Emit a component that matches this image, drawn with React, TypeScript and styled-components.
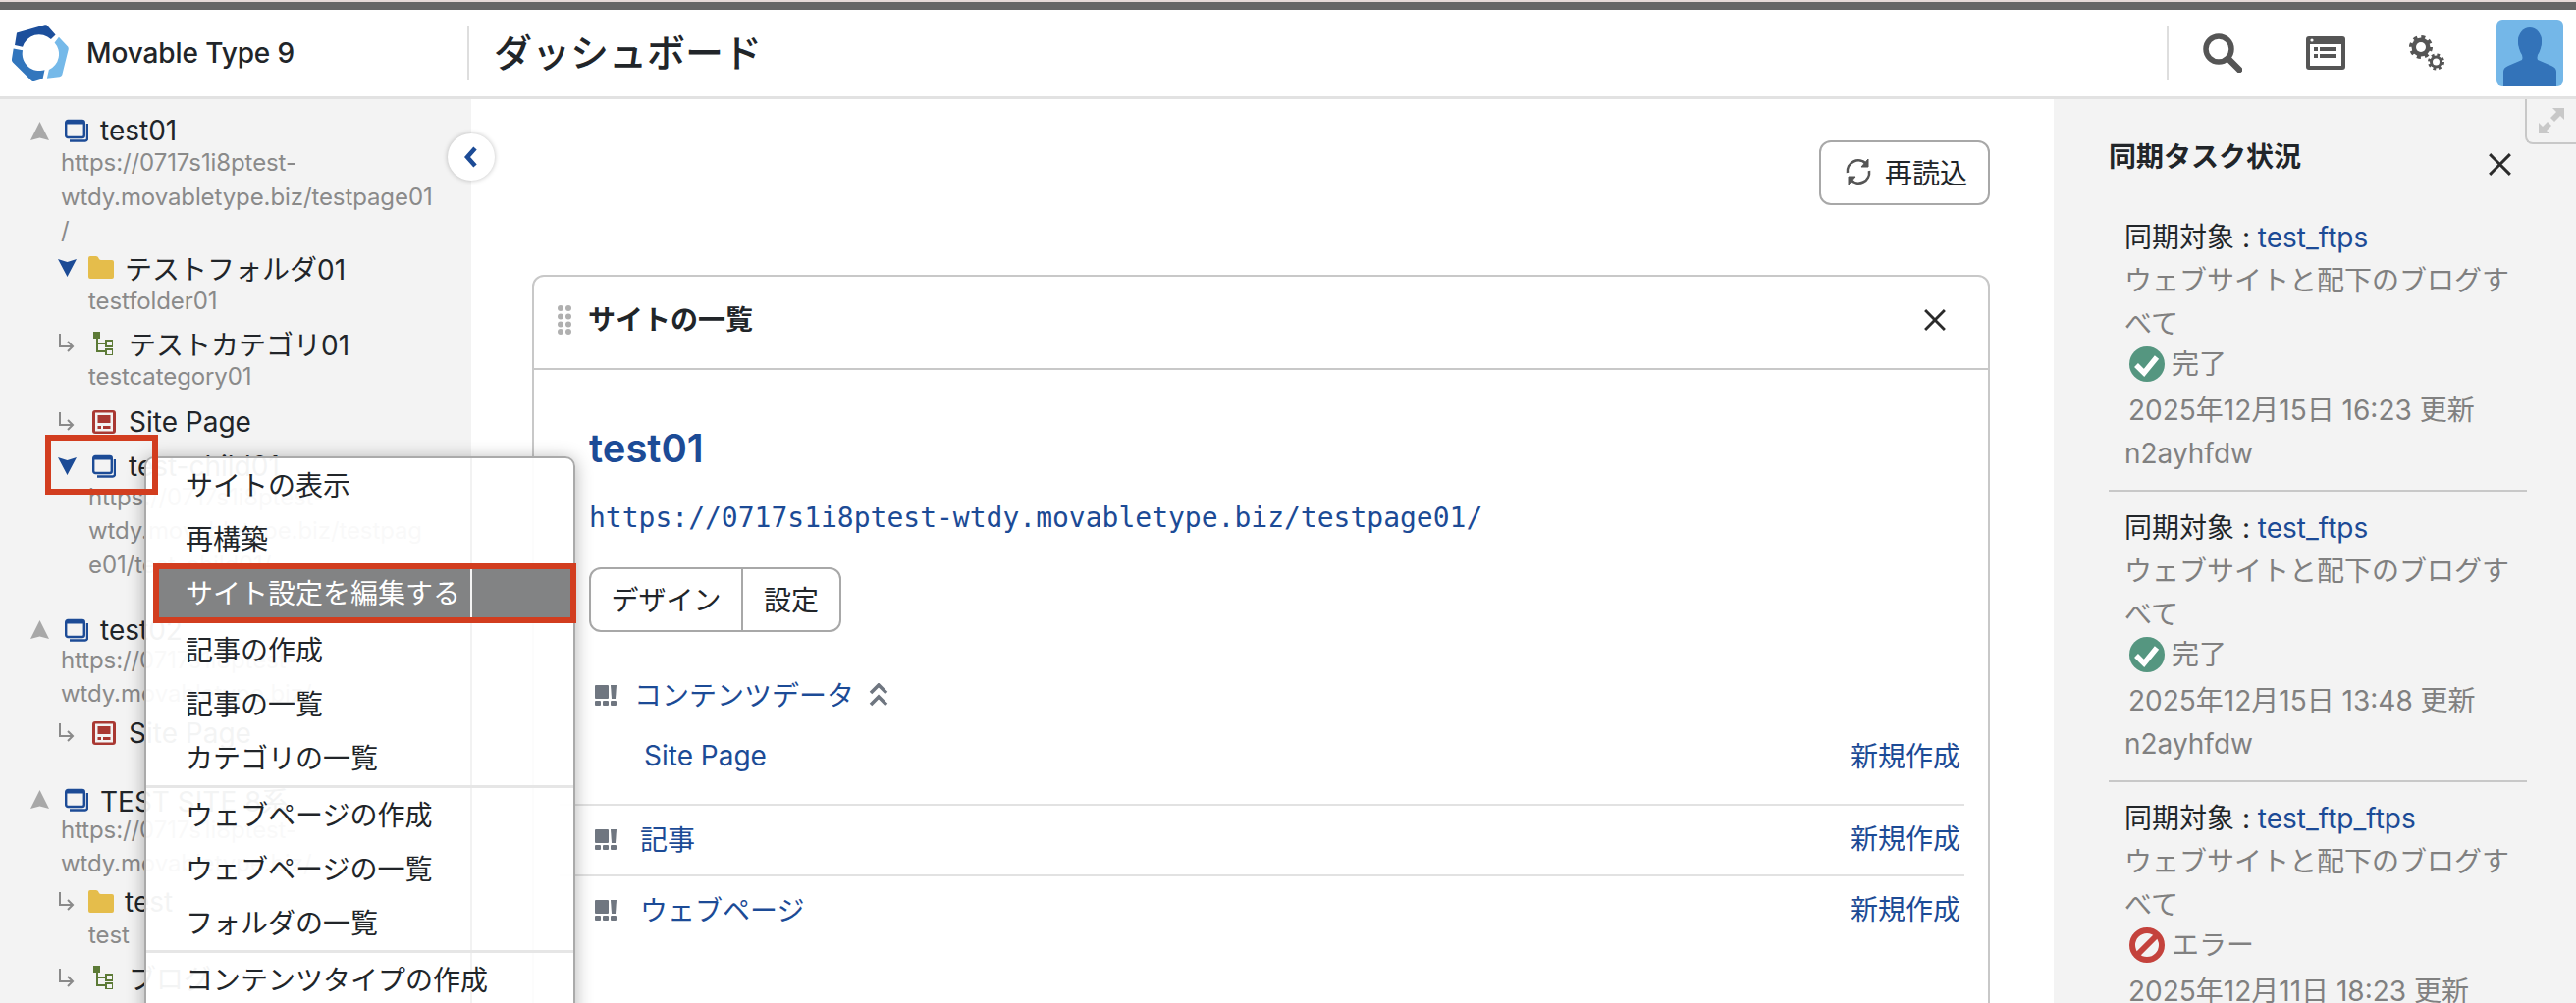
import { FC, ReactNode } from "react";
import styled, { createGlobalStyle } from "styled-components";

const BLUE = "#1c4b96";
const RED_MARK = "#d23d1f";

const GlobalStyle = createGlobalStyle`
  html, body {
    margin: 0;
    padding: 0;
    width: 2624px;
    height: 1022px;
    overflow: hidden;
    background: #fff;
    font-family: Inter, "Noto Sans CJK JP", sans-serif;
    color: #212529;
  }
  * { box-sizing: border-box; }
`;

const Logo: FC = () => (
  <svg width="58" height="58" viewBox="37 75 173 173">
    <path fill="#1c4f9c" d="M52 100 L138 76 Q143 75 147 80 L170 106 L156 120 A52 52 0 0 0 70 143 L46 138 Z" />
    <path fill="#75b9e9" d="M180 113 L208 143 Q210 147 209 151 L190 228 Q188 233 182 234 L144 238 L150 212 A52 52 0 0 0 167 130 Z" />
    <path fill="#3276bd" d="M42 148 L70 153 A52 52 0 0 0 137 213 L131 240 L105 248 Q100 249 96 245 L40 190 Q36 185 37 180 Z" />
  </svg>
);

const SearchIcon: FC = () => (
  <svg width="40" height="40" viewBox="0 0 40 40">
    <circle cx="16" cy="16" r="13" fill="none" stroke="#555" strokeWidth="5.5" />
    <path d="M26 26 L37 37" stroke="#555" strokeWidth="6.5" strokeLinecap="round" />
  </svg>
);

const WindowIcon: FC = () => (
  <svg width="40" height="34" viewBox="0 0 40 34">
    <rect width="40" height="34" rx="3" fill="#555" />
    <rect x="4" y="8" width="32" height="22" fill="#fff" />
    <circle cx="6" cy="4" r="1.6" fill="#fff" />
    <path d="M8 11h4v4H8zM8 18h4v4H8zM14 11h17v4H14zM14 18h17v4H14z" fill="#555" />
  </svg>
);

const Gear: FC<{ cx: number; cy: number; r: number; hole: number; tooth: number; teeth: number }> = ({ cx, cy, r, hole, tooth, teeth }) => {
  const circ = 2 * Math.PI * r;
  return (
    <g>
      <circle cx={cx} cy={cy} r={r} fill="none" stroke="#555" strokeWidth={tooth} strokeDasharray={`${circ / (teeth * 2)} ${circ / (teeth * 2)}`} />
      <circle cx={cx} cy={cy} r={r} fill="#555" />
      <circle cx={cx} cy={cy} r={hole} fill="#fff" />
    </g>
  );
};

const GearsIcon: FC = () => (
  <svg width="36" height="36" viewBox="0 0 36 36">
    <Gear cx={12} cy={12} r={9.5} hole={5} tooth={5} teeth={8} />
    <Gear cx={27.5} cy={27} r={6.5} hole={3.5} tooth={4} teeth={8} />
  </svg>
);

const AvatarArt: FC = () => (
  <svg width="68" height="68" viewBox="0 0 68 68">
    <rect width="68" height="68" rx="6" fill="#74b7e8" />
    <path fill="#3373b9" d="M7 68 V53 Q7 49 12 47 L26 41 Q27 39 26 36 Q22 30 22 21 Q22 14 34 14 Q46 14 46 21 Q46 30 42 36 Q41 39 42 41 L56 47 Q61 49 61 53 V68 Z" />
    <ellipse cx="34" cy="22" rx="12" ry="14" fill="#3373b9" />
  </svg>
);

const SiteIcon: FC = () => (
  <svg width="24" height="24" viewBox="0 0 24 24">
    <path d="M5 22.5 H21 Q23 22.5 23 20 V5" fill="none" stroke={BLUE} strokeWidth="2.4" />
    <rect x="1.2" y="2" width="18.6" height="17" rx="2" fill="#f3f3f3" stroke={BLUE} strokeWidth="2.4" />
    <path d="M2 2 H19 V5.5 H2 Z" fill={BLUE} />
  </svg>
);

const FolderIcon: FC = () => (
  <svg width="26" height="23" viewBox="0 0 26 23">
    <path fill="#e5bd4b" d="M0 2 Q0 0 2 0 H8 Q10 0 11 3 Q11.5 4 13 4 H24 Q26 4 26 6 V21 Q26 23 24 23 H2 Q0 23 0 21 Z" />
  </svg>
);

const CategoryIcon: FC = () => (
  <svg width="20" height="24" viewBox="0 0 20 24">
    <path d="M4 6 V20 H13 M4 12 H13" fill="none" stroke="#5c7a36" strokeWidth="2" />
    <rect width="7" height="7" fill="#5c7a36" />
    <rect x="13" y="9" width="7" height="6" fill="#f3f3f3" stroke="#5c7a36" strokeWidth="2" />
    <rect x="13" y="18" width="7" height="6" fill="#f3f3f3" stroke="#5c7a36" strokeWidth="2" />
  </svg>
);

const PageIcon: FC = () => (
  <svg width="24" height="24" viewBox="0 0 24 24">
    <rect width="24" height="24" rx="3" fill="#a93832" />
    <rect x="3" y="2.5" width="18" height="19" fill="#f3f3f3" />
    <rect x="5.5" y="5" width="13" height="8" fill="#a93832" />
    <rect x="5.5" y="16" width="3.5" height="3" fill="#a93832" />
    <rect x="11" y="16" width="7.5" height="3" fill="#a93832" />
  </svg>
);

const Triangle: FC<{ up?: boolean }> = ({ up }) =>
  up ? (
    <svg width="19" height="19" viewBox="0 0 19 19">
      <path fill="#a8a8a8" d="M9.5 0 L19 19 L9.5 16.5 L0 19 Z" />
    </svg>
  ) : (
    <svg width="19" height="18" viewBox="0 0 19 18">
      <path fill={BLUE} d="M9.5 18 L19 0 L9.5 3 L0 0 Z" />
    </svg>
  );

const ElbowIcon: FC = () => (
  <svg width="17" height="19" viewBox="0 0 17 19">
    <path d="M2 0 V13 H14 M10 8 L15 13 L10 18" fill="none" stroke="#8a8a8a" strokeWidth="2" />
  </svg>
);

const ChevronLeft: FC = () => (
  <svg width="16" height="22" viewBox="0 0 16 22">
    <path d="M12 2 L4 11 L12 20" fill="none" stroke={BLUE} strokeWidth="4.5" />
  </svg>
);

const RefreshIcon: FC = () => (
  <svg width="28" height="28" viewBox="0 0 28 28" fill="none" stroke="#555" strokeWidth="2.6">
    <path d="M3 15 A11 11 0 0 1 22 6" />
    <path d="M25 13 A11 11 0 0 1 6 22" />
    <path d="M24 1 V9 H17 Z" fill="#555" strokeWidth="1" />
    <path d="M4 27 V19 H11 Z" fill="#555" strokeWidth="1" />
  </svg>
);

const CloseIcon: FC<{ size: number }> = ({ size }) => (
  <svg width={size} height={size} viewBox="0 0 20 20">
    <path d="M1 1 L19 19 M19 1 L1 19" stroke="#2b2b2b" strokeWidth="2.6" />
  </svg>
);

const DragDots: FC = () => (
  <svg width="14" height="30" viewBox="0 0 14 30" fill="#b0b0b0">
    {[3, 11.5, 19.5, 27].map((y) => (
      <g key={y}>
        <circle cx="3" cy={y} r="3" />
        <circle cx="11" cy={y} r="3" />
      </g>
    ))}
  </svg>
);

const ContentIcon: FC = () => (
  <svg width="22" height="21" viewBox="0 0 22 21" fill="#6f7680">
    <rect width="14" height="14" rx="1" />
    <path d="M16 0 H22 L21 14 H17 Z" />
    <rect y="16" width="6" height="5" rx="1" />
    <rect x="8" y="16" width="6" height="5" rx="1" />
    <rect x="16" y="16" width="6" height="5" rx="1" />
  </svg>
);

const DoubleChevron: FC = () => (
  <svg width="20" height="24" viewBox="0 0 20 24">
    <path d="M2 10 L10 2 L18 10 M2 22 L10 14 L18 22" fill="none" stroke="#6f7680" strokeWidth="3.6" />
  </svg>
);

const CheckBadge: FC = () => (
  <svg width="36" height="36" viewBox="0 0 36 36">
    <circle cx="18" cy="18" r="18" fill="#559680" />
    <path d="M7 19 L15 27 L28 11" fill="none" stroke="#fff" strokeWidth="5.5" />
  </svg>
);

const ErrorBadge: FC = () => (
  <svg width="36" height="36" viewBox="0 0 36 36">
    <circle cx="18" cy="18" r="15" fill="none" stroke="#c4423c" strokeWidth="6" />
    <path d="M7 29 L29 7" stroke="#c4423c" strokeWidth="6" />
  </svg>
);

const ExpandIcon: FC = () => (
  <svg width="26" height="26" viewBox="0 0 26 26" fill="#c8c8c8">
    <path d="M14 0 H26 V12 L22 8 L16 14 L12 10 L18 4 Z" />
    <path d="M0 26 V15 L4 19 L9 14 L13 18 L8 23 L11 26 Z" />
  </svg>
);

const Page = styled.div`
  position: relative;
  width: 2624px;
  height: 1022px;
  overflow: hidden;
`;

const TopStripe = styled.div`
  height: 10px;
  background: #666;
  border-top: 2px solid #e6dad8;
`;

const Header = styled.header`
  display: flex;
  align-items: center;
  height: 91px;
  border-bottom: 3px solid #e2e2e2;
`;

const Brand = styled.div`
  display: flex;
  align-items: center;
  gap: 18px;
  width: 476px;
  padding-left: 12px;
  font-size: 28px;
  font-weight: 500;
  letter-spacing: -0.1px;
`;

const HeaderDivider = styled.div`
  width: 2px;
  height: 55px;
  background: #dedede;
`;

const PageTitle = styled.h1`
  flex: 1;
  margin: 0 0 6px 25px;
  font-size: 39px;
  font-weight: 500;
`;

const HeaderTools = styled.div`
  display: flex;
  align-items: center;
  width: 415px;
`;

const ToolSlot = styled.div<{ $width: number }>`
  display: flex;
  justify-content: center;
  width: ${(p) => p.$width}px;
`;

const Avatar = styled.div`
  display: flex;
  height: 68px;
  margin-left: 19px;
`;

const Body = styled.div`
  display: flex;
  height: 921px;
`;

const Sidebar = styled.nav`
  width: 480px;
  flex-shrink: 0;
  padding-top: 15px;
  background: #f3f3f3;
  overflow: hidden;
`;

const TreeRow = styled.div<{ $indent: number; $top?: number }>`
  display: flex;
  align-items: center;
  height: 34px;
  margin-top: ${(p) => p.$top ?? 0}px;
  padding-left: ${(p) => p.$indent}px;
  font-size: 28px;
  white-space: nowrap;
`;

const ArrowSlot = styled.span`
  display: flex;
  justify-content: flex-start;
  width: 19px;
`;

const IconSlot = styled.span<{ $left?: number }>`
  display: flex;
  margin-left: ${(p) => p.$left ?? 0}px;
`;

const SubText = styled.div<{ $indent: number; $top?: number }>`
  margin-top: ${(p) => p.$top ?? 0}px;
  padding-left: ${(p) => p.$indent}px;
  font-size: 24px;
  letter-spacing: -0.1px;
  line-height: 34.5px;
  color: #8a8a8a;
  white-space: nowrap;
`;

const CollapseButton = styled.button`
  position: absolute;
  left: 456px;
  top: 136px;
  display: flex;
  align-items: center;
  justify-content: center;
  width: 48px;
  height: 48px;
  padding: 0;
  border: none;
  border-radius: 50%;
  background: #fff;
  box-shadow: 0 0 5px rgba(0, 0, 0, 0.25);
`;

const Main = styled.main`
  flex: 1;
  padding: 42px 65px 0 62px;
  overflow: hidden;
`;

const ReloadRow = styled.div`
  display: flex;
  justify-content: flex-end;
`;

const ReloadButton = styled.button`
  display: flex;
  align-items: center;
  gap: 13px;
  width: 174px;
  height: 66px;
  padding: 0 0 2px 24px;
  border: 2px solid #a8a8a8;
  border-radius: 12px;
  background: #fff;
  color: #212529;
  font: inherit;
  font-size: 28px;
`;

const Card = styled.section`
  margin-top: 71px;
  height: 800px;
  border: 2px solid #c8c8c8;
  border-radius: 12px 12px 0 0;
`;

const CardHeader = styled.div`
  display: flex;
  align-items: center;
  height: 95px;
  padding: 0 43px 5px 24px;
  border-bottom: 2px solid #c8c8c8;
`;

const CardTitle = styled.h2`
  flex: 1;
  margin: 0 0 4px 17px;
  font-size: 28px;
  font-weight: 700;
`;

const CardBody = styled.div`
  padding: 56px 28px 0 56px;
`;

const SiteName = styled.a`
  display: block;
  color: ${BLUE};
  font-size: 40px;
  font-weight: 600;
  line-height: 48px;
`;

const SiteUrl = styled.a`
  display: block;
  margin-top: 27px;
  color: ${BLUE};
  font-family: "DejaVu Sans Mono", monospace;
  font-size: 28px;
  line-height: 40px;
  white-space: nowrap;
`;

const ButtonGroup = styled.div`
  display: inline-flex;
  height: 66px;
  margin-top: 30px;
  border: 2px solid #a8a8a8;
  border-radius: 12px;
`;

const GroupButton = styled.span<{ $width: number; $divided?: boolean }>`
  display: flex;
  align-items: center;
  justify-content: center;
  width: ${(p) => p.$width}px;
  padding-bottom: 2px;
  font-size: 28px;
  border-left: ${(p) => (p.$divided ? "2px solid #a8a8a8" : "none")};
`;

const ContentRow = styled.div<{ $top: number }>`
  display: flex;
  align-items: center;
  height: 40px;
  margin-top: ${(p) => p.$top}px;
  font-size: 28px;
  color: ${BLUE};
`;

const ContentLabel = styled.span<{ $left: number }>`
  margin-left: ${(p) => p.$left}px;
  padding-bottom: 3px;
  white-space: nowrap;
`;

const RowAction = styled.a`
  margin-left: auto;
  padding-bottom: 5px;
  color: ${BLUE};
  white-space: nowrap;
`;

const RowIcon = styled.span`
  display: flex;
  margin-left: 6px;
`;

const ChevronSlot = styled.span`
  display: flex;
  margin-left: 15px;
`;

const RowDivider = styled.div<{ $top: number }>`
  height: 2px;
  margin: ${(p) => p.$top}px -4px 0 -30px;
  background: #e2e2e2;
`;

const TaskPanel = styled.aside`
  position: relative;
  width: 532px;
  flex-shrink: 0;
  padding: 37px 51px 0 56px;
  background: #f3f3f3;
  overflow: hidden;
`;

const ExpandTab = styled.div`
  position: absolute;
  top: 0;
  right: 0;
  display: flex;
  align-items: center;
  justify-content: center;
  width: 52px;
  height: 46px;
  border-left: 2px solid #c8c8c8;
  border-bottom: 2px solid #c8c8c8;
  border-bottom-left-radius: 8px;
`;

const PanelHead = styled.div`
  display: flex;
  align-items: flex-start;
  justify-content: space-between;
  height: 82px;
  padding-right: 15px;
`;

const PanelTitle = styled.h3`
  margin: 0;
  font-size: 28px;
  font-weight: 700;
  line-height: 44px;
`;

const PanelClose = styled.span`
  display: flex;
  margin-top: 18px;
`;

const Task = styled.div<{ $last?: boolean }>`
  margin-right: -1px;
  padding: 0 16px 15px 16px;
  border-bottom: ${(p) => (p.$last ? "none" : "2px solid #c8c8c8")};
  margin-bottom: 15px;
  font-size: 28px;
  line-height: 44px;
  color: #808080;
`;

const TaskTarget = styled.div`
  color: #212529;
  white-space: nowrap;
`;

const TaskLink = styled.a`
  color: ${BLUE};
`;

const TaskStatus = styled.div`
  display: flex;
  align-items: center;
  gap: 7px;
  padding-left: 5px;
  height: 44px;
  margin: -3px 0 3px;
`;

const TaskDate = styled.div`
  padding-left: 4px;
  white-space: nowrap;
`;

const ContextMenu = styled.div`
  position: absolute;
  left: 147px;
  top: 465px;
  width: 439px;
  height: 600px;
  border: 2px solid #aaa;
  border-radius: 10px;
  background: rgba(255, 255, 255, 0.95);
  box-shadow: 0 2px 18px rgba(0, 0, 0, 0.3);

  &::before {
    content: "";
    position: absolute;
    left: 330px;
    top: 0;
    bottom: 0;
    width: 2px;
    background: #f2f2f2;
  }
`;

const MenuItem = styled.div`
  position: relative;
  display: flex;
  align-items: center;
  height: 55px;
  padding: 0 0 3px 40px;
  font-size: 28px;
  white-space: nowrap;
`;

const MenuItemActive = styled.div`
  position: relative;
  display: flex;
  align-items: center;
  height: 61px;
  margin: -3px -3px 0 7px;
  padding: 0 0 3px 27px;
  border: 6px solid ${RED_MARK};
  background: #828384;
  color: #fff;
  font-size: 28px;
  white-space: nowrap;

  &::after {
    content: "";
    position: absolute;
    left: 317px;
    top: 0;
    bottom: 0;
    width: 2px;
    background: #f4f4f4;
  }
`;

const MenuDivider = styled.div`
  position: relative;
  height: 3px;
  background: #e6e6e6;
`;

const TreeMark = styled.div`
  position: absolute;
  left: 46px;
  top: 443px;
  width: 115px;
  height: 61px;
  border: 6px solid ${RED_MARK};
`;

type SubLinesProps = { lines: string[]; indent: number; top?: number };

const SubLines: FC<SubLinesProps> = ({ lines, indent, top }) => (
  <div>
    {lines.map((line, i) => (
      <SubText key={line} $indent={indent} $top={i === 0 ? top : 0}>
        {line}
      </SubText>
    ))}
  </div>
);

const RootRow: FC<{ label: string; top?: number }> = ({ label, top }) => (
  <TreeRow $indent={31} $top={top}>
    <ArrowSlot>
      <Triangle up />
    </ArrowSlot>
    <IconSlot $left={16}>
      <SiteIcon />
    </IconSlot>
    <IconSlot $left={12}>{label}</IconSlot>
  </TreeRow>
);

const ChildRow: FC<{ icon: ReactNode; arrow: ReactNode; label: string; top?: number; iconLeft: number; textLeft: number }> = ({
  icon,
  arrow,
  label,
  top,
  iconLeft,
  textLeft,
}) => (
  <TreeRow $indent={59} $top={top}>
    <ArrowSlot>{arrow}</ArrowSlot>
    <IconSlot $left={iconLeft}>{icon}</IconSlot>
    <IconSlot $left={textLeft}>{label}</IconSlot>
  </TreeRow>
);

const TreeNav: FC = () => (
  <Sidebar>
    <RootRow label="test01" />
    <SubLines indent={62} top={-1} lines={["https://0717s1i8ptest-", "wtdy.movabletype.biz/testpage01", "/"]} />
    <ChildRow arrow={<Triangle />} icon={<FolderIcon />} label="テストフォルダ01" top={3} iconLeft={12} textLeft={11} />
    <SubLines indent={90} lines={["testfolder01"]} />
    <ChildRow arrow={<ElbowIcon />} icon={<CategoryIcon />} label="テストカテゴリ01" top={8.5} iconLeft={17} textLeft={16} />
    <SubLines indent={90} lines={["testcategory01"]} />
    <ChildRow arrow={<ElbowIcon />} icon={<PageIcon />} label="Site Page" top={11.5} iconLeft={16} textLeft={13} />
    <ChildRow arrow={<Triangle />} icon={<SiteIcon />} label="test-child01" top={11} iconLeft={16} textLeft={13} />
    <SubLines indent={90} top={-2} lines={["https://0717s1i8ptest-", "wtdy.movabletype.biz/testpag", "e01/test-child01/"]} />
    <RootRow label="test02" top={31.5} />
    <SubLines indent={62} top={-3} lines={["https://0717s1i8ptest-", "wtdy.movabletype.biz/"]} />
    <ChildRow arrow={<ElbowIcon />} icon={<PageIcon />} label="Site Page" top={5} iconLeft={16} textLeft={13} />
    <RootRow label="TEST SITE 8系" top={34} />
    <SubLines indent={62} top={-3} lines={["https://0717s1i8ptest-", "wtdy.movabletype.biz/"]} />
    <ChildRow arrow={<ElbowIcon />} icon={<FolderIcon />} label="test" top={4} iconLeft={12} textLeft={11} />
    <SubLines indent={90} lines={["test"]} />
    <ChildRow arrow={<ElbowIcon />} icon={<CategoryIcon />} label="ブログ" top={9} iconLeft={17} textLeft={16} />
  </Sidebar>
);

const tasks = [
  { link: "test_ftps", ok: true, date: "2025年12月15日 16:23 更新", user: "n2ayhfdw" },
  { link: "test_ftps", ok: true, date: "2025年12月15日 13:48 更新", user: "n2ayhfdw" },
  { link: "test_ftp_ftps", ok: false, date: "2025年12月11日 18:23 更新", user: "n2ayhfdw" },
];

const App: FC = () => {
  return (
    <Page>
      <GlobalStyle />
      <TopStripe />
      <Header>
        <Brand>
          <Logo />
          Movable Type 9
        </Brand>
        <HeaderDivider />
        <PageTitle>ダッシュボード</PageTitle>
        <HeaderDivider />
        <HeaderTools>
          <ToolSlot $width={110}>
            <SearchIcon />
          </ToolSlot>
          <ToolSlot $width={100}>
            <WindowIcon />
          </ToolSlot>
          <ToolSlot $width={105}>
            <GearsIcon />
          </ToolSlot>
          <Avatar>
            <AvatarArt />
          </Avatar>
        </HeaderTools>
      </Header>
      <Body>
        <TreeNav />
        <Main>
          <ReloadRow>
            <ReloadButton>
              <RefreshIcon />
              再読込
            </ReloadButton>
          </ReloadRow>
          <Card>
            <CardHeader>
              <DragDots />
              <CardTitle>サイトの一覧</CardTitle>
              <CloseIcon size={22} />
            </CardHeader>
            <CardBody>
              <SiteName>test01</SiteName>
              <SiteUrl>https://0717s1i8ptest-wtdy.movabletype.biz/testpage01/</SiteUrl>
              <ButtonGroup>
                <GroupButton $width={153}>デザイン</GroupButton>
                <GroupButton $width={100} $divided>
                  設定
                </GroupButton>
              </ButtonGroup>
              <ContentRow $top={44}>
                <RowIcon>
                  <ContentIcon />
                </RowIcon>
                <ContentLabel $left={18}>コンテンツデータ</ContentLabel>
                <ChevronSlot>
                  <DoubleChevron />
                </ChevronSlot>
              </ContentRow>
              <ContentRow $top={23}>
                <ContentLabel $left={56}>Site Page</ContentLabel>
                <RowAction>新規作成</RowAction>
              </ContentRow>
              <RowDivider $top={28} />
              <ContentRow $top={14}>
                <RowIcon>
                  <ContentIcon />
                </RowIcon>
                <ContentLabel $left={24}>記事</ContentLabel>
                <RowAction>新規作成</RowAction>
              </ContentRow>
              <RowDivider $top={16} />
              <ContentRow $top={14}>
                <RowIcon>
                  <ContentIcon />
                </RowIcon>
                <ContentLabel $left={24}>ウェブページ</ContentLabel>
                <RowAction>新規作成</RowAction>
              </ContentRow>
            </CardBody>
          </Card>
        </Main>
        <TaskPanel>
          <ExpandTab>
            <ExpandIcon />
          </ExpandTab>
          <PanelHead>
            <PanelTitle>同期タスク状況</PanelTitle>
            <PanelClose>
              <CloseIcon size={23} />
            </PanelClose>
          </PanelHead>
          {tasks.map((task, i) => (
            <Task key={task.date} $last={i === tasks.length - 1}>
              <TaskTarget>
                同期対象 : <TaskLink>{task.link}</TaskLink>
              </TaskTarget>
              <div>ウェブサイトと配下のブログすべて</div>
              <TaskStatus>
                {task.ok ? <CheckBadge /> : <ErrorBadge />}
                {task.ok ? "完了" : "エラー"}
              </TaskStatus>
              <TaskDate>{task.date}</TaskDate>
              <div>{task.user}</div>
            </Task>
          ))}
        </TaskPanel>
      </Body>
      <CollapseButton>
        <ChevronLeft />
      </CollapseButton>
      <ContextMenu>
        <MenuItem>サイトの表示</MenuItem>
        <MenuItem>再構築</MenuItem>
        <MenuItemActive>サイト設定を編集する</MenuItemActive>
        <MenuItem>記事の作成</MenuItem>
        <MenuItem>記事の一覧</MenuItem>
        <MenuItem>カテゴリの一覧</MenuItem>
        <MenuDivider />
        <MenuItem>ウェブページの作成</MenuItem>
        <MenuItem>ウェブページの一覧</MenuItem>
        <MenuItem>フォルダの一覧</MenuItem>
        <MenuDivider />
        <MenuItem>コンテンツタイプの作成</MenuItem>
      </ContextMenu>
      <TreeMark />
    </Page>
  );
};

export default App;
